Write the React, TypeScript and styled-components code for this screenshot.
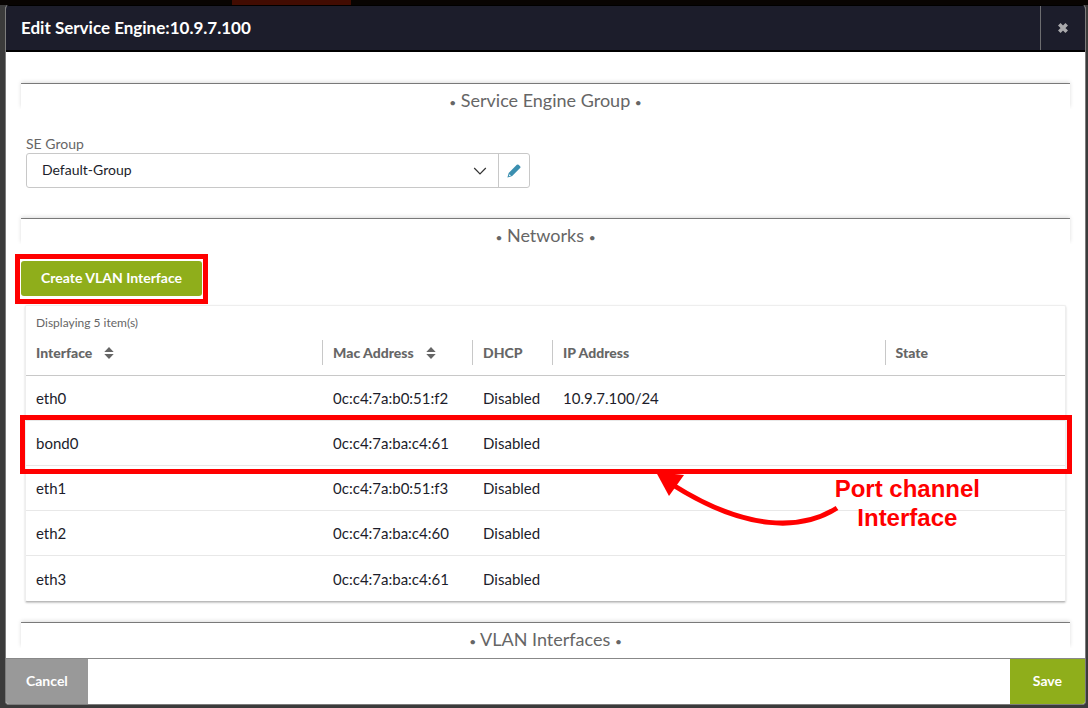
import React from "react";
import styled, { createGlobalStyle } from "styled-components";

const GlobalStyle = createGlobalStyle`
  *, *::before, *::after { box-sizing: border-box; }
  body {
    margin: 0;
    background: #3b3b3b;
    color: #1c1d2b;
    font-family: Lato, "Liberation Sans", sans-serif;
    font-size: 14px;
    line-height: 20px;
  }
  button, select { font: inherit; color: inherit; margin: 0; }
`;

const Page = styled.div`
  min-height: 100vh;
  display: flex;
  flex-direction: column;
`;

const TopStrip = styled.div`
  height: 5px;
  flex: none;
  padding-left: 232px;
  background: #080402;
`;

const ActiveTab = styled.div`
  width: 119px;
  height: 5px;
  background: #420c02;
`;

const Modal = styled.section`
  flex: 1;
  display: flex;
  flex-direction: column;
  margin: 0 2px 3px 5px;
  border: 1px solid #7c7c7c;
  border-top: 0;
  border-radius: 4px;
  background: #fff;
  overflow: hidden;
`;

const Header = styled.header`
  display: flex;
  height: 47px;
  margin: 0 -1px;
  border: 1px solid #000;
  border-bottom-width: 2px;
  background: #1c1d2b;
  color: #fff;
`;

const Title = styled.h1`
  flex: 1;
  margin: 0;
  padding: 0 15px;
  font-size: 17px;
  font-weight: 700;
  line-height: 44px;
`;

const CloseButton = styled.button`
  width: 45px;
  padding: 0;
  border: 0;
  border-left: 1px solid #6d6d70;
  background: none;
  display: flex;
  align-items: center;
  justify-content: center;
`;

const Body = styled.div`
  flex: 1;
  padding: 31px 15px 0;
`;

const SectionHeading = styled.h2`
  position: relative;
  height: 26px;
  margin: 0;
  padding-top: 4px;
  border-top: 1px solid #888;
  color: #666;
  font-size: 18px;
  font-weight: 400;
  line-height: 24px;
  text-align: center;
  &::before {
    content: "";
    position: absolute;
    inset: 0;
    box-shadow: 0 -2px 4px rgba(0, 0, 0, 0.14);
    clip-path: inset(-7px -4px 0 -4px);
  }
`;

const Bullet = styled.span`
  font-size: 12px;
`;

const Field = styled.div`
  width: 50%;
  max-width: 514px;
  padding: 25px 5px 30px;
`;

const Label = styled.label`
  display: block;
  height: 19px;
  color: #666;
`;

const SelectGroup = styled.div`
  display: flex;
  height: 35px;
  border: 1px solid #c8c8c8;
  border-radius: 3px;
`;

const SelectWrap = styled.div`
  flex: 1;
  display: grid;
  align-items: center;
  & > * { grid-area: 1 / 1; }
  & > svg { justify-self: end; margin-right: 11px; pointer-events: none; }
`;

const Select = styled.select`
  width: 100%;
  height: 33px;
  padding: 0 15px 2px;
  border: 0;
  background: none;
  appearance: none;
`;

const EditButton = styled.button`
  width: 31px;
  padding: 0;
  border: 0;
  border-left: 1px solid #c8c8c8;
  background: none;
  display: flex;
  align-items: center;
  justify-content: center;
`;

const ActionBar = styled.div`
  display: flex;
  padding: 17px 0 9px;
`;

const Highlight = styled.div`
  position: relative;
  &::after {
    content: "";
    position: absolute;
    inset: -7px -6px -8px -6px;
    border: 5px solid #f00;
    pointer-events: none;
  }
`;

const CreateButton = styled.button`
  height: 35px;
  padding: 0 20px 2px;
  border: 0;
  border-radius: 3px;
  background: #8fae1b;
  color: #fff;
  font-weight: 700;
`;

const Card = styled.div`
  position: relative;
  margin: 0 4px 20px;
  border: 1px solid #eee;
  border-bottom-color: #bbb;
  border-radius: 2px;
  box-shadow: 0 1px 2px rgba(0, 0, 0, 0.22);
`;

const Count = styled.p`
  margin: 0;
  padding: 7px 10px 7px;
  color: #666;
  font-size: 12px;
`;

const Table = styled.table`
  width: 100%;
  border-collapse: separate;
  border-spacing: 0;
  table-layout: fixed;
  font-size: 15px;
  text-align: left;
`;

const Column = styled.col<{ $width?: string }>`
  width: ${(p) => p.$width ?? "auto"};
`;

const HeadCell = styled.th`
  padding: 0 0 10px;
  border-bottom: 1px solid #c8c8c8;
  color: #666;
  font-size: 14px;
  font-weight: 900;
`;

const HeadLabel = styled.div<{ $divided?: boolean }>`
  display: flex;
  align-items: center;
  gap: 12px;
  height: 25px;
  padding-left: 10px;
  border-left: ${(p) => (p.$divided ? "1px solid #c8c8c8" : "0")};
`;

const Row = styled.tr<{ $marked?: boolean }>`
  position: relative;
  &:last-child td { border-bottom: 0; }
  & > td:first-child { padding-left: 10px; }
  & > td:first-child::after {
    content: ${(p) => (p.$marked ? '""' : "none")};
    position: absolute;
    inset: -6px -7px -8px -6px;
    border: 5px solid #f00;
  }
`;

const Cell = styled.td`
  height: 45px;
  padding: 0 0 0 11px;
  border-bottom: 1px solid #e8e8e8;
`;

const Callout = styled.div`
  position: absolute;
  top: 166px;
  right: 85px;
  display: flex;
  align-items: flex-start;
  color: #f00;
  pointer-events: none;
`;

const CalloutText = styled.p`
  margin: 2px 0 0 -4px;
  font-family: "Liberation Sans", Arial, sans-serif;
  font-size: 24px;
  font-weight: 700;
  line-height: 29px;
  text-align: center;
`;

const Footer = styled.footer`
  display: flex;
  justify-content: space-between;
  height: 46px;
  margin-top: 10px;
  border-top: 1px solid #888;
`;

const FooterButton = styled.button<{ $primary?: boolean }>`
  padding: 0 ${(p) => (p.$primary ? 23 : 20)}px 2px;
  border: 0;
  background: ${(p) => (p.$primary ? "#8fae1b" : "#999")};
  color: #fff;
  font-weight: 700;
`;

const SortIcon = () => (
  <svg width="10" height="12" viewBox="0 0 10 12" fill="#666" aria-hidden="true">
    <path d="M5 0 9.7 5H.3ZM5 12 .3 7h9.4Z" />
  </svg>
);

const Section = ({ children }: { children: React.ReactNode }) => (
  <SectionHeading>
    <Bullet>•</Bullet> {children} <Bullet>•</Bullet>
  </SectionHeading>
);

const columns = [
  { name: "Interface", width: "28.5%", sortable: true },
  { name: "Mac Address", width: "150px", sortable: true },
  { name: "DHCP", width: "80px" },
  { name: "IP Address", width: "32%" },
  { name: "State" },
];

const interfaces = [
  { name: "eth0", mac: "0c:c4:7a:b0:51:f2", ip: "10.9.7.100/24" },
  { name: "bond0", mac: "0c:c4:7a:ba:c4:61", marked: true },
  { name: "eth1", mac: "0c:c4:7a:b0:51:f3" },
  { name: "eth2", mac: "0c:c4:7a:ba:c4:60" },
  { name: "eth3", mac: "0c:c4:7a:ba:c4:61" },
];

export default function App() {
  return (
    <Page>
      <GlobalStyle />
      <TopStrip>
        <ActiveTab />
      </TopStrip>
      <Modal>
        <Header>
          <Title>Edit Service Engine:10.9.7.100</Title>
          <CloseButton aria-label="Close">
            <svg width="10" height="10" viewBox="0 0 10 10" aria-hidden="true">
              <path d="M1.3 1.3 8.7 8.7M8.7 1.3 1.3 8.7" stroke="#a9a9ac" strokeWidth="3.6" />
            </svg>
          </CloseButton>
        </Header>
        <Body>
          <Section>Service Engine Group</Section>
          <Field>
            <Label htmlFor="se-group">SE Group</Label>
            <SelectGroup>
              <SelectWrap>
                <Select id="se-group" defaultValue="Default-Group">
                  <option>Default-Group</option>
                </Select>
                <svg width="14" height="8" viewBox="0 0 14 8" fill="none" stroke="#333" strokeWidth="1.2" aria-hidden="true">
                  <path d="M1.2 1 7 6.8 12.8 1" />
                </svg>
              </SelectWrap>
              <EditButton aria-label="Edit group">
                <svg width="14" height="14" viewBox="0 0 14 14" aria-hidden="true">
                  <path
                    fill="#3b8fb0"
                    fillRule="evenodd"
                    d="M9.8.8Q10.7 0 11.6.8L13.1 2.3Q13.9 3.2 13.1 4.1L5.2 12.1.4 13.6 1.7 8.9ZM2.5 10.2 1.8 12.3 4 11.6Z"
                  />
                </svg>
              </EditButton>
            </SelectGroup>
          </Field>
          <Section>Networks</Section>
          <ActionBar>
            <Highlight>
              <CreateButton>Create VLAN Interface</CreateButton>
            </Highlight>
          </ActionBar>
          <Card>
            <Count>Displaying 5 item(s)</Count>
            <Table>
              <colgroup>
                {columns.map((c) => (
                  <Column key={c.name} $width={c.width} />
                ))}
              </colgroup>
              <thead>
                <tr>
                  {columns.map((c, i) => (
                    <HeadCell key={c.name} scope="col">
                      <HeadLabel $divided={i > 0}>
                        {c.name}
                        {c.sortable && <SortIcon />}
                      </HeadLabel>
                    </HeadCell>
                  ))}
                </tr>
              </thead>
              <tbody>
                {interfaces.map((r) => (
                  <Row key={r.name} $marked={r.marked}>
                    <Cell>{r.name}</Cell>
                    <Cell>{r.mac}</Cell>
                    <Cell>Disabled</Cell>
                    <Cell>{r.ip}</Cell>
                    <Cell />
                  </Row>
                ))}
              </tbody>
            </Table>
            <Callout>
              <svg width="184" height="56" viewBox="654 472 184 56" aria-hidden="true">
                <path d="M836 508C800 531 745 531 672 485" fill="none" stroke="#f00" strokeWidth="5" />
                <path d="M655 472 683 475 668 496Z" fill="#f00" />
              </svg>
              <CalloutText>
                Port channel
                <br />
                Interface
              </CalloutText>
            </Callout>
          </Card>
          <Section>VLAN Interfaces</Section>
        </Body>
        <Footer>
          <FooterButton>Cancel</FooterButton>
          <FooterButton $primary>Save</FooterButton>
        </Footer>
      </Modal>
    </Page>
  );
}
